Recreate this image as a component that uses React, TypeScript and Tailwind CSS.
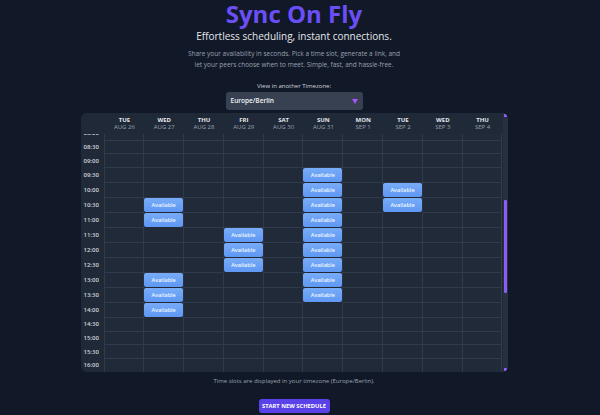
import { useLayoutEffect, useRef } from "react";

const days = [
  { day: "TUE", date: "AUG 26" },
  { day: "WED", date: "AUG 27" },
  { day: "THU", date: "AUG 28" },
  { day: "FRI", date: "AUG 29" },
  { day: "SAT", date: "AUG 30" },
  { day: "SUN", date: "AUG 31" },
  { day: "MON", date: "SEP 1" },
  { day: "TUE", date: "SEP 2" },
  { day: "WED", date: "SEP 3" },
  { day: "THU", date: "SEP 4" },
];

// column index -> available times
const available: Record<number, string[]> = {
  1: ["10:30", "11:00", "13:00", "13:30", "14:00"],
  3: ["11:30", "12:00", "12:30"],
  5: ["09:30", "10:00", "10:30", "11:00", "11:30", "12:00", "12:30", "13:00", "13:30"],
  7: ["10:00", "10:30"],
};

const times: string[] = [];
for (let h = 0; h < 24; h++) {
  const hh = String(h).padStart(2, "0");
  times.push(`${hh}:00`, `${hh}:30`);
}

export default function App() {
  const scrollRef = useRef<HTMLDivElement>(null);

  useLayoutEffect(() => {
    if (scrollRef.current) scrollRef.current.scrollTop = 226;
  }, []);

  return (
    <div
      className="min-h-screen bg-[#111827] text-white"
      style={{ fontFamily: '"Open Sans", "Noto Sans", sans-serif' }}
    >
      <div className="w-[588px] flex flex-col items-center pt-[2px]">
        <h1 className="text-[24px] leading-[24px] font-bold text-[#6b4ff6]">
          Sync On Fly
        </h1>
        <p className="mt-[3px] text-[10px] leading-[14px] text-gray-200">
          Effortless scheduling, instant connections.
        </p>
        <p className="mt-[5px] text-center text-[6.5px] leading-[11px] text-gray-400">
          Share your availability in seconds. Pick a time slot, generate a link, and
          <br />
          let your peers choose when to meet. Simple, fast, and hassle-free.
        </p>

        <label className="mt-[12px] text-[6px] leading-[9px] text-gray-300">
          View in another Timezone:
        </label>
        <div className="mt-[1px] w-[137px] h-[18px] rounded-[3px] bg-[#374151] flex items-center justify-between px-[5px]">
          <span className="text-[6.5px] font-semibold text-gray-100">Europe/Berlin</span>
          <svg width="6" height="5" viewBox="0 0 6 5">
            <path d="M0 0 L6 0 L3 5 Z" fill="#a855f7" />
          </svg>
        </div>

        <div className="mt-[3px] w-[427px] h-[259px] rounded-[6px] bg-[#1f2937] overflow-hidden flex">
          <div
            ref={scrollRef}
            className="flex-1 h-full overflow-y-auto [scrollbar-width:none] [&::-webkit-scrollbar]:hidden"
          >
            <div className="sticky top-0 z-10 grid grid-cols-[24px_repeat(10,1fr)] h-[21px] bg-[#1f2937]">
              <div />
              {days.map((d, i) => (
                <div key={i} className="flex flex-col items-center justify-center">
                  <span className="text-[6px] leading-[7px] font-bold text-gray-200">{d.day}</span>
                  <span className="text-[6px] leading-[7px] text-gray-400">{d.date}</span>
                </div>
              ))}
            </div>

            {times.map((t) => (
              <div key={t} className="grid grid-cols-[24px_repeat(10,1fr)]">
                <div className="flex items-center pl-[3px] border-r border-[#2f3a4a] text-[6px] font-semibold text-gray-300">
                  {t}
                </div>
                {days.map((_, i) => {
                  const isFree = available[i]?.includes(t);
                  return (
                    <div
                      key={i}
                      className="min-h-[13.7px] border-r border-b border-[#2f3a4a] bg-[#212a38]"
                    >
                      {isFree && (
                        <div className="h-[14px] rounded-[2px] bg-gradient-to-b from-[#78acf8] to-[#5f97f3] shadow-[0_1px_2px_rgba(0,0,0,0.4)] flex items-center justify-center text-[5.5px] font-semibold text-blue-50">
                          Available
                        </div>
                      )}
                    </div>
                  );
                })}
              </div>
            ))}
          </div>

          {/* scrollbar */}
          <div className="relative w-[5px] h-full bg-[#263041]">
            <div className="absolute top-[1px] left-[1px] w-[3px] h-[3px] bg-[#8b5cf6]" />
            <div className="absolute top-[87px] left-[1px] w-[3px] h-[93px] rounded-[1px] bg-[#8b5cf6]" />
            <div className="absolute bottom-[1px] left-[1px] w-[3px] h-[3px] bg-[#8b5cf6]" />
          </div>
        </div>

        <p className="mt-[4px] text-[6px] leading-[10px] text-gray-400">
          Time slots are displayed in your timezone (Europe/Berlin).
        </p>

        <button className="mt-[13px] w-[71px] h-[14px] rounded-[3px] bg-[#5b42e8] text-[5.8px] font-bold uppercase text-white">
          Start New Schedule
        </button>
      </div>
    </div>
  );
}
